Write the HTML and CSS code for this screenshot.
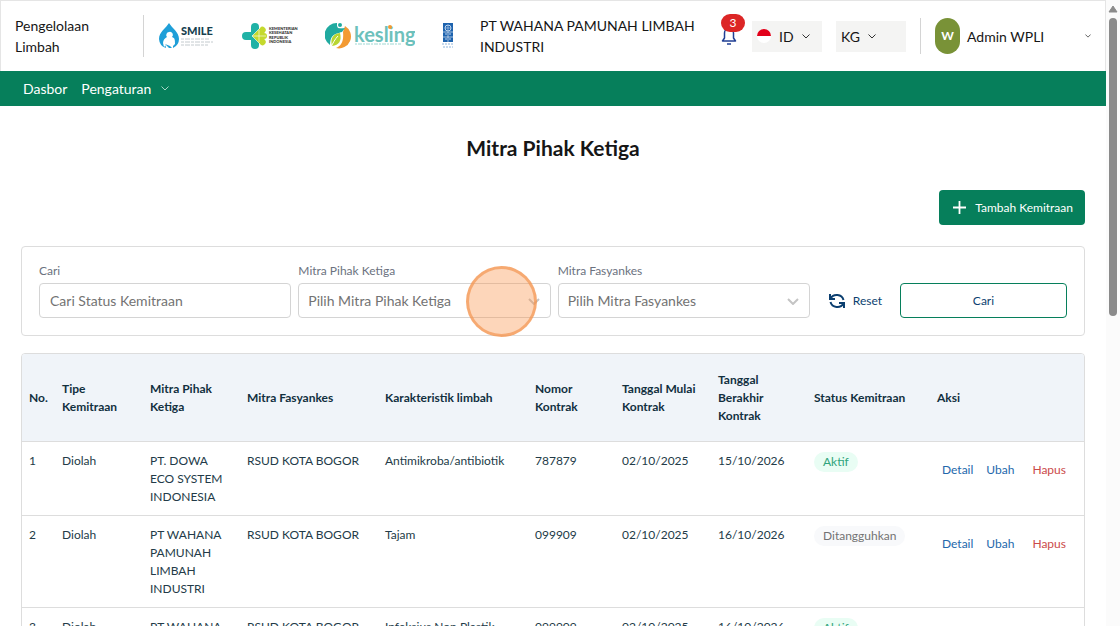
FILE: index.html
```html
<!DOCTYPE html>
<html lang="id">

<head>
  <meta charset="UTF-8">
  <meta name="viewport" content="width=device-width, initial-scale=1.0">
  <title>Mitra Pihak Ketiga</title>
  <link rel="stylesheet" href="styles.css">
</head>

<body>

  <div class="page">
    <header class="header">
      <div class="brand">Pengelolaan Limbah</div>

      <div class="logos">
        <svg class="logo" width="57" height="28" viewBox="0 0 57 28" role="img" aria-label="SMILE">
          <path d="M11 1C8 6 1 10 1 17a10 10 0 0 0 7 9l-1-5 4 3 4-3v5a10 10 0 0 0 6-9C21 10 14 6 11 1z" fill="#1f9fd8"/>
          <path d="M11 10a3 3 0 0 0-2 5c-2 1-4 3-4 6l1 4 2-2 5 3 4-4c0-4 0-6-3-7a3 3 0 0 0-3-5z" fill="#fff"/>
          <path d="M7 22l4 4h3l-2-2z" fill="#1f9fd8"/>
          <text x="23" y="13" class="logo-smile">SMILE</text>
          <path d="M23 17h28M23 20h32M23 23h27" stroke="#c3cace" stroke-width="1" stroke-dasharray="3 1 5 1"/>
        </svg>
        <svg class="logo" width="56" height="28" viewBox="0 0 56 28" role="img" aria-label="Kementerian Kesehatan Republik Indonesia">
          <path d="M9 10V5a4 4 0 0 1 8 0v5l-4 4z" fill="#20b2a6"/>
          <path d="M9 18v5a4 4 0 0 0 8 0v-5l-4-4z" fill="#20b2a6"/>
          <path d="M10 10H4a4 4 0 0 0 0 8h6l4-4z" fill="#20b2a6"/>
          <path d="M10 14l8-8a3 3 0 0 1 5 4l-3 4 3 4a3 3 0 0 1-5 4z" fill="#c5d92d"/>
          <path d="M14 11h8a3 3 0 0 1 0 6h-8z" fill="#c5d92d"/>
          <path d="M10 14h14M10 14l8-8M10 14l8 8M17 8v12" stroke="#fff" stroke-width=".6"/>
          <g class="logo-kemenkes">
            <text x="27" y="8">KEMENTERIAN</text>
            <text x="27" y="12">KESEHATAN</text>
            <text x="27" y="17">REPUBLIK</text>
            <text x="27" y="21">INDONESIA</text>
          </g>
        </svg>
        <svg class="logo" width="90" height="28" viewBox="0 0 90 28" role="img" aria-label="kesling">
          <path d="M12 1A12 12 0 0 0 5 23c0-8 3-11 9-12l4-4-5-1-1-2z" fill="#20aaa0"/>
          <path d="M20 4a12 12 0 0 1-9 22c5-2 8-6 7-16z" fill="#f39a32"/>
          <path d="M12 7l8-1-3 4-5 1z" fill="#20aaa0"/>
          <circle cx="15" cy="3" r="2" fill="#20aaa0"/>
          <path d="M7 24c-2-8 1-12 8-13 2 8-1 12-8 13z" fill="#b9d532"/>
          <path d="M6 25c2-4 4-8 7-11" stroke="#fff" fill="none"/>
          <text x="29" y="20" class="logo-kesling">kesling</text>
          <circle cx="65" cy="5" r="2" fill="#f39a32"/>
          <path d="M30 22h46" stroke="#9fd8d3" stroke-dasharray="2 1 4 1"/>
        </svg>
        <svg class="logo" width="12" height="28" viewBox="0 0 12 28" role="img" aria-label="UNDP">
          <path d="M1 1h10v19H1z" fill="#1e63ae"/>
          <circle cx="6" cy="6" r="3" fill="none" stroke="#bcd4ee"/>
          <path d="M3 6h6M6 3v6" stroke="#bcd4ee" stroke-width=".6"/>
          <path d="M1 10h10M1 15h10M6 10v10" stroke="#fff" stroke-width=".6"/>
          <path d="M3 12h2M7 12h2M3 17h2M7 17h2" stroke="#bcd4ee"/>
          <path d="M0 22h12M1 25h10" stroke="#8fb4da" stroke-dasharray="2 1"/>
        </svg>
      </div>

      <div class="company">PT WAHANA PAMUNAH LIMBAH INDUSTRI</div>

      <button class="bell" type="button" aria-label="Notifikasi">
        <svg width="16" height="18" viewBox="0 0 16 18" fill="none" stroke="#203f94" stroke-width="1.5">
          <path d="M1.500 14h13L12.500 11V6a4.500 4.500 0 0 0-9 0v5z" stroke-linejoin="round"/>
          <path d="M6 17h4"/>
        </svg>
        <span class="bell-count">3</span>
      </button>

      <div class="picker picker-lang">
        <svg width="14" height="14" viewBox="0 0 14 14" aria-hidden="true">
          <circle cx="7" cy="7" r="7" fill="#fff"/>
          <path d="M0 7a7 7 0 0 1 14 0z" fill="#e2001a"/>
        </svg>
        <select aria-label="Bahasa">
          <option>ID</option>
        </select>
        <svg class="chevron" width="8" height="5" viewBox="0 0 8 5"><path d="M.5.5L4 4 7.500.5"/></svg>
      </div>

      <div class="picker">
        <select aria-label="Satuan">
          <option>KG</option>
        </select>
        <svg class="chevron" width="8" height="5" viewBox="0 0 8 5"><path d="M.5.5L4 4 7.500.5"/></svg>
      </div>

      <button class="user" type="button">
        <span class="avatar">W</span>
        <span>Admin WPLI</span>
        <svg class="chevron user-chevron" width="6" height="4" viewBox="0 0 8 5"><path d="M.5.5L4 4 7.500.5"/></svg>
      </button>
    </header>

    <nav class="nav">
      <a href="#">Dasbor</a>
      <a href="#">Pengaturan
        <svg class="chevron" width="8" height="5" viewBox="0 0 8 5"><path d="M.5.5L4 4 7.500.5"/></svg>
      </a>
    </nav>

    <main class="main">
      <h1>Mitra Pihak Ketiga</h1>

      <div class="toolbar">
        <button class="btn btn-add" type="button">
          <svg width="13" height="13" viewBox="0 0 13 13" stroke="#fff" stroke-width="1.8"><path d="M6.500 0v13M0 6.500h13"/></svg>
          Tambah Kemitraan
        </button>
      </div>

      <form class="filter">
        <div class="field">
          <label for="cari">Cari</label>
          <input type="text" id="cari" placeholder="Cari Status Kemitraan">
        </div>

        <div class="field">
          <label for="mitra">Mitra Pihak Ketiga</label>
          <div class="select">
            <select id="mitra">
              <option>Pilih Mitra Pihak Ketiga</option>
            </select>
            <svg class="chevron" width="12" height="7" viewBox="0 0 12 7"><path d="M1 1l5 5 5-5"/></svg>
            <span class="click-mark"></span>
          </div>
        </div>

        <div class="field">
          <label for="fasyankes">Mitra Fasyankes</label>
          <div class="select">
            <select id="fasyankes">
              <option>Pilih Mitra Fasyankes</option>
            </select>
            <svg class="chevron" width="12" height="7" viewBox="0 0 12 7"><path d="M1 1l5 5 5-5"/></svg>
          </div>
        </div>

        <button class="btn btn-reset" type="reset">
          <svg width="18" height="16" viewBox="0 0 18 16" fill="none" stroke="#0c3f70" stroke-width="2">
            <path d="M2 1v5h5M16 15v-5h-5"/>
            <path d="M2.500 5.500A7 6.500 0 0 1 15.500 7M15.500 10.500A7 6.500 0 0 1 2.500 9"/>
          </svg>
          Reset
        </button>
        <button class="btn btn-search" type="submit">Cari</button>
      </form>

      <div class="table-box">
        <table class="table">
          <thead>
            <tr>
              <th class="col-no">No.</th>
              <th class="col-tipe">Tipe Kemitraan</th>
              <th class="col-mitra">Mitra Pihak Ketiga</th>
              <th class="col-fasyankes">Mitra Fasyankes</th>
              <th class="col-limbah">Karakteristik limbah</th>
              <th class="col-nomor">Nomor Kontrak</th>
              <th class="col-tanggal">Tanggal Mulai Kontrak</th>
              <th class="col-tanggal">Tanggal Berakhir Kontrak</th>
              <th class="col-status">Status Kemitraan</th>
              <th class="col-aksi">Aksi</th>
            </tr>
          </thead>
          <tbody>
            <tr>
              <td>1</td>
              <td>Diolah</td>
              <td>PT. DOWA ECO SYSTEM INDONESIA</td>
              <td>RSUD KOTA BOGOR</td>
              <td>Antimikroba/antibiotik</td>
              <td>787879</td>
              <td>02/10/2025</td>
              <td>15/10/2026</td>
              <td><span class="badge badge-aktif">Aktif</span></td>
              <td>
                <div class="actions">
                  <a href="#">Detail</a>
                  <a href="#">Ubah</a>
                  <button class="btn-hapus" type="button">Hapus</button>
                </div>
              </td>
            </tr>
            <tr>
              <td>2</td>
              <td>Diolah</td>
              <td>PT WAHANA PAMUNAH LIMBAH INDUSTRI</td>
              <td>RSUD KOTA BOGOR</td>
              <td>Tajam</td>
              <td>099909</td>
              <td>02/10/2025</td>
              <td>16/10/2026</td>
              <td><span class="badge">Ditangguhkan</span></td>
              <td>
                <div class="actions">
                  <a href="#">Detail</a>
                  <a href="#">Ubah</a>
                  <button class="btn-hapus" type="button">Hapus</button>
                </div>
              </td>
            </tr>
            <tr>
              <td>3</td>
              <td>Diolah</td>
              <td>PT WAHANA PAMUNAH LIMBAH INDUSTRI</td>
              <td>RSUD KOTA BOGOR</td>
              <td>Infeksius Non Plastik</td>
              <td>099909</td>
              <td>02/10/2025</td>
              <td>16/10/2026</td>
              <td><span class="badge badge-aktif">Aktif</span></td>
              <td>
                <div class="actions">
                  <a href="#">Detail</a>
                  <a href="#">Ubah</a>
                  <button class="btn-hapus" type="button">Hapus</button>
                </div>
              </td>
            </tr>
          </tbody>
        </table>
      </div>
    </main>
  </div>

  <div class="scrollbar" aria-hidden="true">
    <svg width="10" height="8" viewBox="0 0 10 8"><path d="M5 1l4 6H1z" fill="#8b8b8b" stroke="#8b8b8b" stroke-linejoin="round"/></svg>
    <div class="scrollbar-thumb"></div>
  </div>

</body>

</html>
```
FILE: styles.css
```css
* {
  box-sizing: border-box;
}

body {
  display: flex;
  height: 100vh;
  margin: 0;
  overflow: hidden;
  background-color: #fff;
  color: #161616;
  font-family: Lato, "Liberation Sans", sans-serif;
  font-size: 12px;
  line-height: 18px;
}

button,
input,
select {
  margin: 0;
  padding: 0;
  border: none;
  background: none;
  color: inherit;
  font: inherit;
}

button {
  cursor: pointer;
}

select {
  appearance: none;
}

a {
  text-decoration: none;
}

svg {
  flex: none;
}

.page {
  flex: 1;
  min-width: 0;
}

.chevron {
  fill: none;
  stroke: #333;
  pointer-events: none;
}

/* header */
.header {
  display: flex;
  align-items: center;
  height: 71px;
  padding: 0 14px;
  border: 1px solid #e5e5e5;
  border-bottom: none;
  font-size: 14px;
  line-height: 21px;
}

.brand {
  width: 128px;
  padding-right: 40px;
}

.logos {
  display: flex;
  align-items: center;
  gap: 27px;
  height: 42px;
  padding-left: 14px;
  border-left: 1px solid #d4d4d4;
}

.logo-smile {
  fill: #173f50;
  font-size: 11px;
  font-weight: 900;
}

.logo-kemenkes {
  fill: #333;
  font-size: 4px;
  font-weight: 900;
}

.logo-kesling {
  fill: #6dc1bc;
  font-size: 20px;
  font-weight: 700;
}

.company {
  flex: 1;
  padding: 0 20px 0 26px;
}

.bell {
  position: relative;
  height: 18px;
  margin-right: 15px;
}

.bell svg {
  display: block;
}

.bell-count {
  position: absolute;
  top: -13px;
  left: 0;
  width: 24px;
  border-radius: 9px;
  background-color: #dc2626;
  color: #fff;
  font-size: 12px;
  line-height: 18px;
}

.picker {
  display: flex;
  align-items: center;
  gap: 8px;
  width: 70px;
  height: 31px;
  margin-right: 14px;
  padding: 0 5px;
  background-color: #f4f4f3;
}

.user {
  display: flex;
  flex: 0 1 171px;
  align-items: center;
  gap: 7px;
  height: 36px;
  padding-left: 14px;
  border-left: 1px solid #d4d4d4;
}

.avatar {
  width: 25px;
  border-radius: 13px;
  background-color: #799237;
  color: #fff;
  font-size: 12px;
  font-weight: 700;
  line-height: 36px;
}

.user-chevron {
  margin-left: auto;
}

/* menu */
.nav {
  display: flex;
  align-items: center;
  gap: 14px;
  height: 35px;
  padding: 0 23px;
  background-color: #067f5b;
  font-size: 14px;
}

.nav a {
  display: flex;
  align-items: center;
  gap: 10px;
  color: #fff;
}

.nav .chevron {
  stroke: #a9d6c8;
}

/* content */
.main {
  padding: 28px 21px 0;
}

h1 {
  margin: 0 0 28px;
  font-size: 21px;
  line-height: 28px;
  text-align: center;
}

.toolbar {
  display: flex;
  justify-content: flex-end;
  margin-bottom: 21px;
}

.btn {
  display: flex;
  align-items: center;
  justify-content: center;
  height: 35px;
  border-radius: 4px;
  color: #0c3f70;
}

.btn-add {
  gap: 9px;
  padding: 0 12px 0 14px;
  background-color: #067f5b;
  color: #fff;
}

.filter {
  display: flex;
  align-items: flex-end;
  gap: 7px;
  margin-bottom: 17px;
  padding: 17px;
  border: 1px solid #ddd;
  border-radius: 4px;
}

.field {
  flex: 1;
  min-width: 0;
}

.field label {
  display: block;
  margin-bottom: 5px;
  color: #6b7280;
  line-height: 14px;
}

.field input,
.field select {
  display: block;
  width: 100%;
  height: 35px;
  padding: 0 9px;
  border: 1px solid #d4d4d4;
  border-radius: 4px;
  color: #737373;
  font-size: 14px;
}

.field input {
  padding: 0 10px;
}

.field input::placeholder {
  color: #737373;
}

.select {
  position: relative;
}

.select .chevron {
  position: absolute;
  top: 15px;
  right: 11px;
  stroke: #c4c4c4;
  stroke-width: 2;
}

.click-mark {
  position: absolute;
  top: -17px;
  right: 14px;
  width: 71px;
  height: 71px;
  border: 3px solid rgba(242, 150, 82, 0.7);
  border-radius: 50%;
  background-color: rgba(249, 153, 82, 0.4);
  pointer-events: none;
}

.btn-reset {
  gap: 7px;
  width: 76px;
}

.btn-search {
  width: 167px;
  border: 1px solid #067f5b;
}

/* table */
.table-box {
  overflow: hidden;
  border: 1px solid #ddd;
  border-radius: 4px;
}

.table {
  width: 100%;
  border-collapse: collapse;
  table-layout: fixed;
  color: #233b48;
}

.table th {
  padding: 17px 7px 16px;
  border-bottom: 1px solid #ddd;
  background-color: #f0f4f9;
  color: #12303f;
  text-align: left;
}

.table td {
  padding: 10px 7px 9px;
  border-bottom: 1px solid #ddd;
  vertical-align: top;
}

.col-no { width: 33px; }
.col-tipe { width: 88px; }
.col-mitra { width: 97px; }
.col-fasyankes { width: 138px; }
.col-limbah { width: 150px; }
.col-nomor { width: 87px; }
.col-tanggal { width: 96px; }
.col-status { width: 123px; }
.col-aksi { width: 154px; }

.badge {
  display: inline-block;
  padding: 1px 9px;
  border-radius: 10px;
  background-color: #f8f9fb;
  color: #737373;
}

.badge-aktif {
  background-color: #e9fdf4;
  color: #2fa47c;
}

.actions {
  display: flex;
  align-items: center;
  gap: 13px;
  height: 36px;
  padding-left: 5px;
}

.actions a {
  color: #2368ab;
}

.btn-hapus {
  margin-left: 5px;
  color: #cb4a4a;
}

/* scroll track at the right edge */
.scrollbar {
  display: flex;
  flex-direction: column;
  align-items: center;
  gap: 5px;
  width: 14px;
  padding-top: 5px;
  background-color: #fbfbfb;
}

.scrollbar-thumb {
  width: 8px;
  height: 48%;
  border-radius: 4px;
  background-color: #8b8b8b;
}
```
